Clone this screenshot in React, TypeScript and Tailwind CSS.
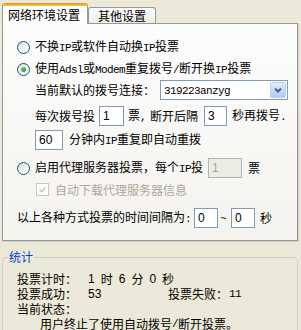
import React from "react";

// XP style vote settings panel

const Mono: React.FC<React.PropsWithChildren> = ({ children }) => (
  <span className="font-['Liberation_Mono',monospace] text-[11px] tracking-[-0.6px]">
    {children}
  </span>
);

function Radio({ checked }: { checked?: boolean }) {
  return (
    <span className="flex h-[13px] w-[13px] shrink-0 items-center justify-center rounded-full border border-[#1c5180] bg-linear-to-br from-[#d6d6d0] via-[#f4f4f1] to-white">
      {checked && (
        <span className="h-[5px] w-[5px] rounded-full bg-linear-to-br from-[#5fd95b] to-[#1e9a1e]" />
      )}
    </span>
  );
}

function Field({
  value,
  className,
  disabled,
}: {
  value: string;
  className: string;
  disabled?: boolean;
}) {
  return (
    <span
      className={`flex h-[20px] shrink-0 items-center pl-[3px] font-['Liberation_Sans',sans-serif] text-[12px] ${
        disabled
          ? "border border-[#a9b8c9] bg-[#ecebe4] text-[#aca899]"
          : "border border-[#7f9db9] bg-white text-black"
      } ${className}`}
    >
      {value}
    </span>
  );
}

export default function App() {
  return (
    <div className="h-[330px] w-[301px] overflow-hidden bg-[#ece9d8] pl-[2px] pt-[3px] font-['Noto_Sans_CJK_SC',sans-serif] text-[12px] leading-[14px] text-black">
      {/* tabs */}
      <div className="flex h-[20px] items-end">
        <div className="relative z-10 -mb-px flex h-[21px] w-[86px] flex-col overflow-hidden rounded-t-[3px] border-x border-[#919b9c] bg-white">
          <div className="h-[3px] shrink-0 bg-linear-to-b from-[#e68b2c] to-[#ffc73c]" />
          <div className="flex flex-1 items-center pl-[5px]">网络环境设置</div>
        </div>
        <div className="flex h-[16px] w-[68px] items-center rounded-t-[3px] border border-b-0 border-[#919b9c] bg-linear-to-b from-white to-[#ecebe6] pl-[9px]">
          其他设置
        </div>
      </div>

      {/* panel */}
      <div className="flex w-[296px] flex-col border border-[#919b9c] bg-linear-to-b from-[#fdfdfd] to-[#f4f3ee] pb-[12px] shadow-[1px_1px_0_#d2d0c3]">
        <div className="mt-[16px] flex h-[14px] items-center gap-[5px] pl-[14px]">
          <Radio />
          <span>
            不换<Mono>IP</Mono>或软件自动换<Mono>IP</Mono>投票
          </span>
        </div>

        <div className="mt-[8px] flex h-[14px] items-center gap-[5px] pl-[14px]">
          <Radio checked />
          <span>
            使用<Mono>Adsl</Mono>或<Mono>Modem</Mono>重复拨号<Mono>/</Mono>断开换
            <Mono>IP</Mono>投票
          </span>
        </div>

        <div className="mt-[4px] flex h-[20px] items-center pl-[32px]">
          <span>当前默认的拨号连接：</span>
          <div className="ml-[5px] flex h-[20px] w-[128px] items-center border border-[#7f9db9] bg-white">
            <span className="flex-1 pl-[3px]">
              <Mono>319223anzyg</Mono>
            </span>
            <span className="mr-px flex h-[16px] w-[16px] items-center justify-center rounded-[2px] border border-[#b9cdf6] bg-linear-to-b from-[#e2ebfe] to-[#b4c9f8]">
              <svg width="8" height="6" viewBox="0 0 8 6">
                <path d="M1 1.5 L4 4.5 L7 1.5" fill="none" stroke="#4d6185" strokeWidth="2" />
              </svg>
            </span>
          </div>
        </div>

        <div className="mt-[6px] flex h-[20px] items-center pl-[32px]">
          <span>每次拨号投</span>
          <Field value="1" className="ml-[4px] w-[25px]" />
          <span className="ml-[4px]">
            票<Mono>,</Mono>
          </span>
          <span className="ml-[4px]">断开后隔</span>
          <Field value="3" className="ml-[6px] w-[23px]" />
          <span className="ml-[5px]">
            秒再拨号<Mono>.</Mono>
          </span>
        </div>

        <div className="mt-[4px] flex h-[20px] items-center pl-[32px]">
          <Field value="60" className="w-[28px]" />
          <span className="ml-[6px]">
            分钟内<Mono>IP</Mono>重复即自动重拨
          </span>
        </div>

        <div className="mt-[8px] flex h-[20px] items-center pl-[14px]">
          <Radio />
          <span className="ml-[5px]">
            启用代理服务器投票，每个<Mono>IP</Mono>投
          </span>
          <Field value="1" disabled className="ml-[5px] w-[34px]" />
          <span className="ml-[6px]">票</span>
        </div>

        <div className="mt-[5px] flex h-[13px] items-center pl-[33px]">
          <span className="flex h-[13px] w-[13px] items-center justify-center border border-[#cac8bb] bg-white">
            <svg width="9" height="9" viewBox="0 0 9 9">
              <path d="M1.5 4.5 L3.5 6.5 L7.5 2.5" fill="none" stroke="#cac8bb" strokeWidth="1.6" />
            </svg>
          </span>
          <span className="ml-[6px] text-[#aca899]">自动下载代理服务器信息</span>
        </div>

        <div className="mt-[12px] flex h-[20px] items-center pl-[14px]">
          <span>
            以上各种方式投票的时间间隔为<Mono>:</Mono>
          </span>
          <Field value="0" className="ml-[3px] w-[24px]" />
          <span className="ml-[2px]">
            <Mono>~</Mono>
          </span>
          <Field value="0" className="ml-[5px] w-[24px]" />
          <span className="ml-[5px]">秒</span>
        </div>
      </div>

      {/* statistics */}
      <fieldset className="mt-[8px] w-[296px] rounded-[4px] border border-[#d0d0bf] pb-[10px]">
        <legend className="ml-[5px] h-[16px] px-px leading-[16px] text-[#0046d5]">统计</legend>
        <div className="flex flex-col pl-[14px] pt-[6px]">
          <div className="flex h-[15px] items-center">
            <span className="w-[71px]">投票计时：</span>
            <span className="flex gap-[6px]">
              <span className="font-['Liberation_Sans',sans-serif]">1</span>
              <span>时</span>
              <span className="font-['Liberation_Sans',sans-serif]">6</span>
              <span>分</span>
              <span className="font-['Liberation_Sans',sans-serif]">0</span>
              <span>秒</span>
            </span>
          </div>
          <div className="flex h-[15px] items-center">
            <span className="w-[71px]">投票成功：</span>
            <span className="w-[80px] font-['Liberation_Sans',sans-serif]">53</span>
            <span className="w-[61px]">投票失败：</span>
            <Mono>11</Mono>
          </div>
          <div className="flex h-[15px] items-center">当前状态：</div>
          <div className="flex h-[15px] items-center pl-[23px]">
            用户终止了使用自动拨号<Mono>/</Mono>断开投票。
          </div>
        </div>
      </fieldset>
    </div>
  );
}
